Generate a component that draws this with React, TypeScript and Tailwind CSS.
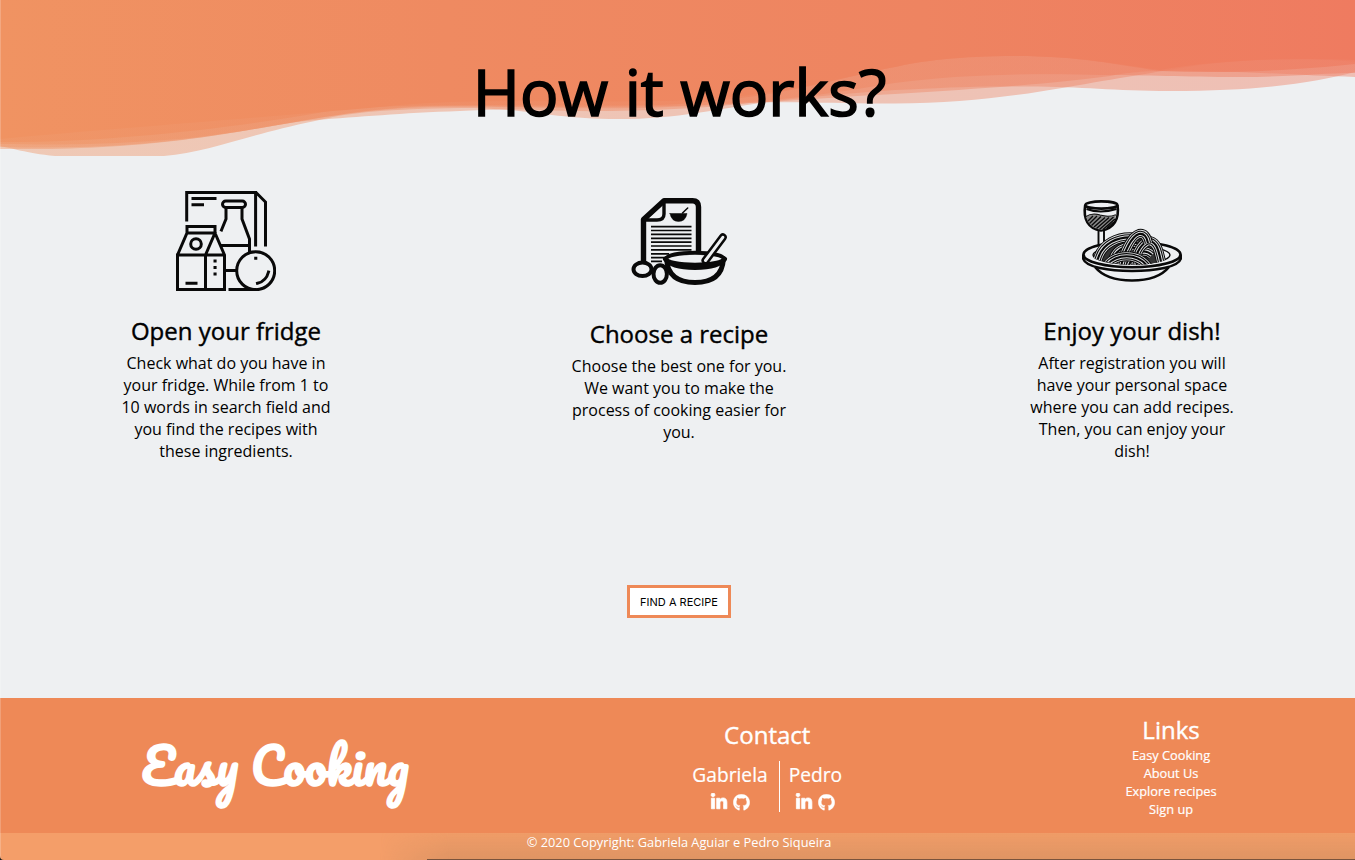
import React from "react";
import { FaLinkedinIn, FaGithub } from "react-icons/fa";

function Waves() {
  return (
    <svg className="block h-[156px] w-full" viewBox="0 0 1355 156" preserveAspectRatio="none">
      <defs>
        <linearGradient id="wave" x1="0" x2="1355" y1="0" y2="0" gradientUnits="userSpaceOnUse">
          <stop offset="0" stopColor="#f09362" />
          <stop offset=".33" stopColor="#ef8a61" />
          <stop offset=".68" stopColor="#ee8461" />
          <stop offset="1" stopColor="#ef7b60" />
        </linearGradient>
      </defs>
      <g fill="url(#wave)">
        <path opacity=".42" d="M0 0H1355V72C1315 82 1265 91 1170 91C1110 91 1080 86 1020 86.500C970 86 940 88 895 90C840 94 800 98 767 102C720 108 680 119 618 119C550 119 530 108 460 108C390 109 350 112 315 121C250 134 210 152 164 156H55C25 153 12 148 0 146Z" />
        <path opacity=".42" d="M0 0H1355V62C1310 57 1250 59 1200 65C1150 73 1120 78 1065 87.500C1010 97 960 103 895 103.500C840 104 800 101 750 103C690 110 600 113 540 110C510 109 480 110 460 111C400 113 360 117 315 120C250 126 180 151 0 149Z" />
        <path opacity=".42" d="M0 0H1355V77C1310 76 1260 72 1200 71C1150 70 1130 72 1110 76C1060 83 980 89 895 94C830 97 750 105 640 108C560 109 500 106 430 107C350 109 290 124 230 133C150 146 80 149 0 147Z" />
        <path opacity=".45" d="M0 0H1355V73C1325 73 1290 77 1240 77C1180 77 1150 75 1100 75C1040 73 960 74 895 83C830 94 760 104 670 106C580 108 520 106 430 106C340 109 270 130 190 138C110 145 60 145 0 144Z" />
        <path opacity=".65" d="M0 0H1355V64C1300 70 1230 74 1160 71C1110 64 1080 56 1015 56C960 56 920 61 895 67C840 77 780 100 660 105C530 107 450 102 340 109C260 124 120 143 0 142Z" />
        <path d="M0 0H1355V60C1280 57 1210 61 1160 70C1120 65 1080 56 1015 56C960 56 920 61 895 67C840 77 780 99 660 101C530 103 470 98 380 107C220 121 120 128 0 139Z" />
      </g>
    </svg>
  );
}

function Groceries() {
  return (
    <svg className="size-[100px]" viewBox="0 0 100 100" fill="none" stroke="#090909" strokeWidth="3" strokeLinecap="square">
      <path d="M10.700 29V1.500H79.600V54M80 1.500L89.500 11V54M17 7.600H39M17 13.700H26.500" />
      <rect x="46.500" y="10" width="23" height="6.500" rx="3.200" />
      <path d="M50 17V28L45.500 39M66 17V28L73.500 48V61M46 54.500H73M49 79.500H60M54 98.500H79" />
      <path d="M11 35.500H39V42H11ZM11 42L1.500 64V98.500H48.500V64L39 42M1.500 64H48M39 42L29.500 64V98.500M11 92.300H20M39 70h.1M39 76.500h.1M39 83h.1M79.700 67.300h.1" />
      <circle cx="20" cy="53" r="5.300" />
      <circle cx="79.700" cy="79.700" r="19" />
      <path d="M92.500 81C91 87 87 91 81.500 92.300" />
    </svg>
  );
}

function Recipe() {
  return (
    <svg className="h-[106px] w-[100px]" viewBox="0 0 100 106" fill="none" stroke="#090909" strokeLinecap="round" strokeLinejoin="round">
      <path d="M14.500 74V31.500L35 12.700H63.500Q69.500 12.700 69.500 19V66" strokeWidth="5.400" />
      <path d="M35 13V26Q35 32 28 32H14.800Z" strokeWidth="3.400" />
      <path d="M41 25.500H58Q56.500 33.500 49.500 33.500Q42.500 33.500 41 25.500Z" fill="#090909" strokeWidth="0.500" />
      <path d="M53.500 25L58.700 20" strokeWidth="1.500" />
      <path d="M22 38.700H62.500M22 42.500H62.500M22 46.400H62.500M22 50.300H62.500M22 54.200H62.500M22 58H62.500M22 61.900H62.500M22 65.800H40M22 69.700H36M22 73.400H33" strokeWidth="1.700" strokeLinecap="butt" />
      <path d="M37.500 71Q39 94.500 66 94.500Q93 94.500 94.500 71Z" fill="#eef0f2" strokeWidth="4.800" />
      <path d="M36.500 71Q42 79 66 79.500Q90 79 95.500 71" strokeWidth="5" />
      <ellipse cx="66" cy="70.800" rx="28.800" ry="6" fill="#eef0f2" strokeWidth="4" />
      <path d="M93.800 49.300L76.500 72.500" strokeWidth="8" />
      <path d="M93.800 49.300L76.500 72.500" stroke="#eef0f2" strokeWidth="3" />
      <ellipse cx="13.500" cy="81.300" rx="9" ry="6.800" fill="#eef0f2" strokeWidth="4" />
      <ellipse cx="31.200" cy="86" rx="6.700" ry="8.800" fill="#eef0f2" strokeWidth="4" />
    </svg>
  );
}

function Strand({ d }: { d: string }) {
  return (
    <g>
      <path d={d} strokeWidth="10" />
      <path d={d} strokeWidth="8" stroke="#dcdee0" />
      <path d={d} strokeWidth="6.400" />
      <path d={d} strokeWidth="4.200" stroke="#dcdee0" />
      <path d={d} strokeWidth="2.100" />
    </g>
  );
}

function Pasta() {
  return (
    <svg className="size-[100px]" viewBox="0 0 100 100" fill="none" stroke="#090909" strokeWidth="2.600" strokeLinecap="butt">
      <defs>
        <clipPath id="dish"><path d="M0 0H100V64Q88 64 84 69Q70 74 50 74Q26 73 12 67Z" /></clipPath>
      </defs>
      <path d="M3.200 14C1 28 6 38 19 39.500C32 38 37.500 28 35.500 14" />
      <ellipse cx="19.300" cy="14" rx="16" ry="3.600" />
      <path d="M4.500 18Q18 23 34.500 18M4 26Q10 22 18 24.500Q27 27 34 24M16.500 39V55M22 39V52" strokeWidth="1.900" />
      <path d="M4 26Q10 22 18 24.500Q27 27 34 24Q31 37 19 39Q7 37 4 26Z" fill="#888" stroke="none" />
      <path d="M6 30L11 25M7.500 32.500L15 25M9.500 34.500L19 25.500M12 36L23 26.500M14.500 37.500L27 26.500M17.500 38.500L31.500 26M21 38.500L33 28M25 37L32 31" strokeWidth="1.400" />
      <path d="M13 76Q24 89.500 50 89.500Q76 89.500 87 76" />
      <ellipse cx="50" cy="63.500" rx="48.500" ry="12.800" fill="#eef0f2" />
      <path d="M1.300 63.500V68C6 84 94 84 98.700 68V63.500" />
      <ellipse cx="49.500" cy="64" rx="38.500" ry="9" strokeWidth="1.400" />
      <g clipPath="url(#dish)">
        <path d="M14 68Q18 50 38 46L58 42L72 50L80 70L60 76H30Z" fill="#333" stroke="none" />
        <Strand d="M30 76C31 58 43 53 56 58" />
        <Strand d="M45 80C49 65 60 55 70 64" />
        <Strand d="M15 72C18 52 37 44 56 47" />
        <Strand d="M55 75C51 60 63 50 68 50C76 52 77 62 80 75" />
        <Strand d="M39 76C42 60 50 45 57 43C62 42 65 46 66 52" />
        <Strand d="M25 74C34 63 55 61 66 76" />
      </g>
    </svg>
  );
}

function Step({ icon, title, lines, className }: { icon: React.ReactNode; title: string; lines: string[]; className: string }) {
  return (
    <section className={`flex w-[216px] flex-col items-center text-center ${className}`}>
      {icon}
      <h2 className="mt-[23px] whitespace-nowrap text-[24px] leading-[33px] [-webkit-text-stroke:0.4px_black]">{title}</h2>
      <p className="mt-[5px] whitespace-nowrap text-[16px] leading-[22px]">
        {lines.map((line) => <span className="block" key={line}>{line}</span>)}
      </p>
    </section>
  );
}

function Person({ name }: { name: string }) {
  return (
    <div className="flex flex-col items-center">
      <p className="text-[19.2px] leading-[27px] [-webkit-text-stroke:0.2px_white]">{name}</p>
      <div className="mt-[5px] flex items-center gap-[5px]"><FaLinkedinIn size={18} stroke="white" strokeWidth={22} /><FaGithub size={17} stroke="white" strokeWidth={10} /></div>
    </div>
  );
}

export default function App() {
  return (
    <div className="relative flex h-[860px] flex-col overflow-hidden bg-[#eef0f2] font-['Open_Sans',sans-serif] text-black">
      <header className="relative h-[156px] shrink-0">
        <Waves />
        <h1 className="absolute inset-x-0 top-[48px] pl-[4px] text-center text-[64px] leading-[88px] [-webkit-text-stroke:1.7px_black]">How it works?</h1>
      </header>
      <main className="flex h-[542px] shrink-0 flex-col items-center">
        <div className="flex h-[429px] w-full justify-between pl-[118px] pr-[115px]">
          <Step className="pt-[35px]" icon={<Groceries />} title="Open your fridge" lines={["Check what do you have in", "your fridge. While from 1 to", "10 words in search field and", "you find the recipes with", "these ingredients."]} />
          <Step className="pt-[32px]" icon={<Recipe />} title="Choose a recipe" lines={["Choose the best one for you.", "We want you to make the", "process of cooking easier for", "you."]} />
          <Step className="pt-[35px]" icon={<Pasta />} title="Enjoy your dish!" lines={["After registration you will", "have your personal space", "where you can add recipes.", "Then, you can enjoy your", "dish!"]} />
        </div>
        <button className="ml-[3px] h-[33px] w-[104px] border-3 border-[#ee8957] bg-white pt-[2px] font-['Inter',sans-serif] text-[11px]">FIND A RECIPE</button>
      </main>
      <footer className="flex h-[162px] shrink-0 flex-col bg-[#ee8957] text-white">
        <div className="flex h-[135px] shrink-0">
          <div className="w-[552px] pt-[30px] text-center font-['Pacifico',cursive] text-[48px] font-bold leading-[76px]">Easy Cooking</div>
          <div className="flex w-[430px] flex-col items-center pl-[5px] pt-[20px]">
            <h2 className="text-[24px] leading-[34px] [-webkit-text-stroke:0.4px_white]">Contact</h2>
            <div className="mt-[9px] flex h-[51px]"><Person name="Gabriela" /><div className="ml-[11px] mr-[9px] w-px bg-white" /><Person name="Pedro" /></div>
          </div>
          <div className="flex w-[377px] flex-col items-center pl-[8px] pt-[15px] text-[12.8px] leading-[18px] [-webkit-text-stroke:0.2px_white]">
            <h2 className="text-[24px] leading-[33px] [-webkit-text-stroke:0.4px_white]">Links</h2>
            <span>Easy Cooking</span><span>About Us</span><span>Explore recipes</span><span>Sign up</span>
          </div>
        </div>
        <div className="relative h-[27px] bg-[#f49e69]">
          <div className="absolute inset-y-0 left-[380px] right-0 bg-linear-to-b from-[#b8845210] to-[#b0805850] [mask-image:linear-gradient(to_right,transparent,black_70px)]" />
          <div className="absolute bottom-0 left-[427px] right-0 h-px bg-[#79533c]" />
          <p className="relative pl-[3px] text-center text-[12.8px] leading-[19px]">© 2020 Copyright: Gabriela Aguiar e Pedro Siqueira</p>
        </div>
      </footer>
      <div className="absolute inset-y-0 left-0 w-px bg-white/20" />
      <svg className="absolute bottom-0 left-0 size-[4px]" viewBox="0 0 4 4"><path d="M0 0Q0 4 4 4H0Z" fill="#1b1b1b" /></svg>
    </div>
  );
}
